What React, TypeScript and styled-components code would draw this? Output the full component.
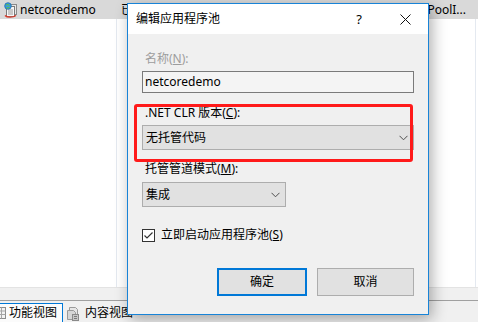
import styled, { createGlobalStyle } from "styled-components";

const GlobalStyle = createGlobalStyle`
  html, body {
    margin: 0;
    padding: 0;
    background: #ffffff;
  }
  body {
    font-family: "Noto Sans", "Noto Sans CJK SC", sans-serif;
    font-size: 12px;
    color: #000;
  }
  * { box-sizing: border-box; }
`;

const Screen = styled.div`
  position: relative;
  width: 478px;
  height: 322px;
  overflow: hidden;
  background: #ffffff;
`;

const Manager = styled.div`
  display: flex;
  flex-direction: column;
  height: 100%;
`;

const ListArea = styled.div`
  flex: 1;
  display: flex;
  flex-direction: column;
  background: #ffffff;
`;

const SelectedRow = styled.div`
  display: flex;
  align-items: center;
  height: 19px;
  background: #d9d9d9;
  line-height: 16px;
  white-space: nowrap;
`;

const Cell = styled.div<{ $width?: number; $right?: boolean }>`
  display: flex;
  align-items: center;
  gap: 2px;
  width: ${p => (p.$width ? `${p.$width}px` : "auto")};
  flex: ${p => (p.$width ? "none" : "1")};
  justify-content: ${p => (p.$right ? "flex-end" : "flex-start")};
  padding: ${p => (p.$right ? "0 12px 0 0" : "0 0 0 4px")};
  overflow: hidden;
`;

const Columns = styled.div`
  flex: 1;
  display: grid;
  grid-template-columns: 116px 1px 1fr 1px 2px;
`;

const ColumnLine = styled.div`
  background: #e4e9f0;
`;

const ScrollBand = styled.div`
  height: 14px;
  background: #f0f0f0;
  border-top: 1px solid #e3e3e3;
  border-bottom: 1px solid #a0a0a0;
`;

const TabBar = styled.div`
  height: 21px;
  display: flex;
  align-items: flex-end;
  background: #f0f0f0;
`;

const Tab = styled.div<{ $active?: boolean }>`
  display: flex;
  align-items: center;
  gap: ${p => (p.$active ? "2px" : "5px")};
  height: 19px;
  margin-left: ${p => (p.$active ? "-8px" : "0")};
  padding: ${p => (p.$active ? "0 5px 0 0" : "0 4px 0 2px")};
  background: ${p => (p.$active ? "#fbfbfb" : "transparent")};
  border: 1px solid ${p => (p.$active ? "#0078d7" : "transparent")};
  border-bottom: none;
  line-height: 16px;
  color: #000;
`;

const Dialog = styled.div`
  position: absolute;
  left: 127px;
  top: 3px;
  width: 302px;
  height: 312px;
  display: flex;
  flex-direction: column;
  background: #f0f0f0;
  border: 1px solid #1883d7;
  box-shadow: 3px 4px 14px rgba(0, 0, 0, 0.32);
`;

const TitleBar = styled.div`
  display: flex;
  align-items: center;
  height: 30px;
  padding-left: 8px;
  background: #ffffff;
  line-height: 16px;
`;

const Title = styled.div`
  flex: 1;
`;

const TitleButton = styled.div<{ $w: number }>`
  display: flex;
  align-items: center;
  justify-content: center;
  width: ${p => p.$w}px;
  height: 30px;
  font-size: 13px;
`;

const Body = styled.div`
  display: flex;
  flex-direction: column;
  padding: 0 14px;
`;

const Label = styled.div<{ $top: number; $disabled?: boolean }>`
  margin-top: ${p => p.$top}px;
  padding-left: 3px;
  line-height: 16px;
  color: ${p => (p.$disabled ? "#9d9d9d" : "#000")};
  u { text-underline-offset: 1px; }
`;

const TextBox = styled.div`
  margin-top: 4px;
  height: 22px;
  display: flex;
  align-items: center;
  padding-left: 2px;
  background: #f4f4f4;
  border: 1px solid #7a7a7a;
  line-height: 16px;
`;

const Combo = styled.div<{ $width?: number; $top: number }>`
  margin-top: ${p => p.$top}px;
  width: ${p => (p.$width ? `${p.$width}px` : "100%")};
  height: 25px;
  display: flex;
  align-items: center;
  justify-content: space-between;
  padding: 0 5px 0 3px;
  background: #e1e1e1;
  border: 1px solid #adadad;
  line-height: 16px;
`;

const CheckRow = styled.label`
  margin-top: 20px;
  display: flex;
  align-items: center;
  gap: 6px;
  line-height: 16px;
  u { text-underline-offset: 1px; }
`;

const CheckBox = styled.span`
  width: 13px;
  height: 13px;
  display: flex;
  background: #ffffff;
  border: 1px solid #333333;
`;

const ButtonRow = styled.div`
  margin-top: 25px;
  display: flex;
  justify-content: flex-end;
  gap: 10px;
`;

const Button = styled.div<{ $default?: boolean; $width: number }>`
  width: ${p => p.$width}px;
  height: 28px;
  display: flex;
  align-items: center;
  justify-content: center;
  background: #e1e1e1;
  border: ${p => (p.$default ? "2px solid #0078d7" : "1px solid #adadad")};
  line-height: 16px;
`;

const Highlight = styled.div`
  position: absolute;
  left: 6px;
  top: 100px;
  width: 279px;
  height: 58px;
  border: 3px solid #ff1a1a;
  border-radius: 3px;
  pointer-events: none;
`;

const PoolIcon = () => (
  <svg width="14" height="16" viewBox="0 0 14 16">
    <rect x="4.5" y="2.5" width="8" height="10" fill="#e8e8e8" stroke="#8a8a8a" />
    <rect x="2.5" y="4.5" width="8" height="10" fill="#f6f6f6" stroke="#7a7a7a" />
    <path d="M4 8h5M4 10h5M4 12h5" stroke="#9a9a9a" strokeWidth="1" />
    <circle cx="4" cy="4" r="3.3" fill="#3a9be0" stroke="#1c6fb0" strokeWidth="0.8" />
    <path d="M2 3.2c1 -1 2.5 -1 3.5 0.5M2.5 5.5c1 0.6 2 0.6 3 -0.3" stroke="#5fbf4a" strokeWidth="1.1" fill="none" />
    <path d="M1 13.5c2 2.2 8 2.2 11 0" stroke="#d83a2a" strokeWidth="1.4" fill="none" />
  </svg>
);

const FeatureIcon = () => (
  <svg width="14" height="14" viewBox="0 0 14 14">
    <rect x="1.5" y="1.5" width="11" height="11" fill="#f2f2f2" stroke="#8c8c8c" />
    <path d="M1.5 5h11M1.5 8.5h11M5 1.5v11M8.5 1.5v11" stroke="#a5a5a5" />
  </svg>
);

const ContentIcon = () => (
  <svg width="14" height="15" viewBox="0 0 14 15">
    <path d="M3.5 1.5h6l2 2v6h-8z" fill="#e6e6e6" stroke="#9a9a9a" />
    <path d="M1.5 4.5h6l2 2v7h-8z" fill="#d6d6d6" stroke="#9a9a9a" />
    <rect x="6.5" y="8.5" width="6" height="6" fill="#c8c8c8" stroke="#8a8a8a" />
    <path d="M8 10.5h3M8 12.5h3" stroke="#7a7a7a" />
  </svg>
);

const Chevron = () => (
  <svg width="9" height="6" viewBox="0 0 9 6">
    <polyline points="0.5,0.8 4.5,4.8 8.5,0.8" fill="none" stroke="#4d4d4d" strokeWidth="1" />
  </svg>
);

const CloseGlyph = () => (
  <svg width="11" height="11" viewBox="0 0 11 11">
    <path d="M0.5 0.5L10.5 10.5M10.5 0.5L0.5 10.5" stroke="#111" strokeWidth="1" />
  </svg>
);

const Check = () => (
  <svg width="11" height="11" viewBox="0 0 11 11">
    <polyline points="1.5,5.5 4,8 9.5,2.5" fill="none" stroke="#333" strokeWidth="1.2" />
  </svg>
);

export default function App() {
  return (
    <>
      <GlobalStyle />
      <Screen>
        <Manager>
          <ListArea>
            <SelectedRow>
              <Cell $width={117}>
                <PoolIcon />
                netcoredemo
              </Cell>
              <Cell $width={10}>已启动</Cell>
              <Cell $right>ApplicationPoolI...</Cell>
            </SelectedRow>
            <Columns>
              <div />
              <ColumnLine />
              <div />
              <ColumnLine />
              <div />
            </Columns>
          </ListArea>
          <ScrollBand />
          <TabBar>
            <Tab $active>
              <FeatureIcon />
              功能视图
            </Tab>
            <Tab>
              <ContentIcon />
              内容视图
            </Tab>
          </TabBar>
        </Manager>

        <Dialog>
          <TitleBar>
            <Title>编辑应用程序池</Title>
            <TitleButton $w={46}>?</TitleButton>
            <TitleButton $w={46}>
              <CloseGlyph />
            </TitleButton>
          </TitleBar>
          <Body>
            <Label $top={17} $disabled>
              名称(<u>N</u>):
            </Label>
            <TextBox>netcoredemo</TextBox>
            <Label $top={12}>
              .NET CLR 版本(<u>C</u>):
            </Label>
            <Combo $top={4}>
              无托管代码
              <Chevron />
            </Combo>
            <Label $top={11}>
              托管管道模式(<u>M</u>):
            </Label>
            <Combo $top={5} $width={144}>
              集成
              <Chevron />
            </Combo>
            <CheckRow>
              <CheckBox>
                <Check />
              </CheckBox>
              <span>
                立即启动应用程序池(<u>S</u>)
              </span>
            </CheckRow>
            <ButtonRow>
              <Button $default $width={90}>确定</Button>
              <Button $width={97}>取消</Button>
            </ButtonRow>
          </Body>
          <Highlight />
        </Dialog>
      </Screen>
    </>
  );
}
